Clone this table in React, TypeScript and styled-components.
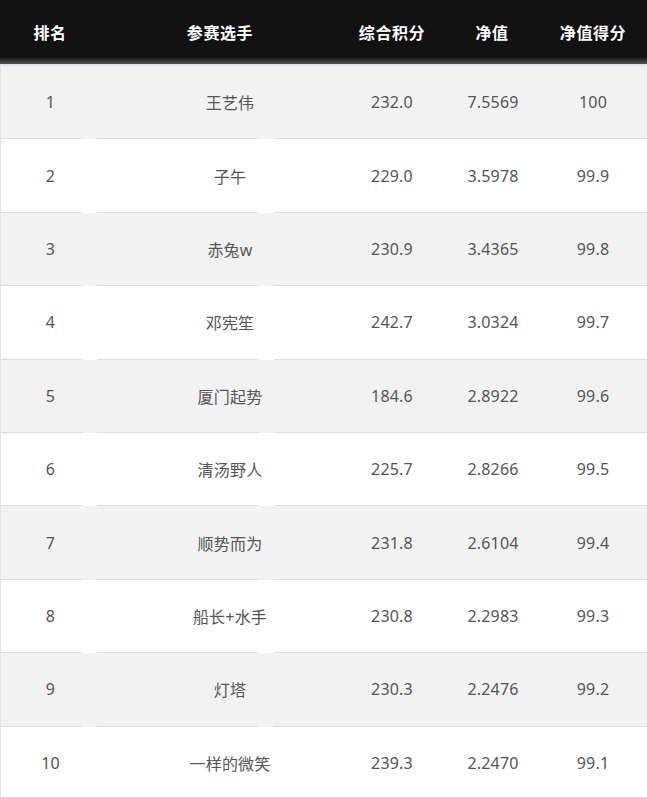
import styled, { createGlobalStyle } from 'styled-components';

const GlobalStyle = createGlobalStyle`
  html, body {
    margin: 0;
    padding: 0;
    background: #fff;
  }
  body {
    font-family: "Noto Sans", "Noto Sans CJK SC", sans-serif;
  }
`;

type Entry = {
  rank: number;
  name: string;
  score: string;
  value: string;
  points: string;
};

const entries: Entry[] = [
  { rank: 1, name: '王艺伟', score: '232.0', value: '7.5569', points: '100' },
  { rank: 2, name: '子午', score: '229.0', value: '3.5978', points: '99.9' },
  { rank: 3, name: '赤兔w', score: '230.9', value: '3.4365', points: '99.8' },
  { rank: 4, name: '邓宪笙', score: '242.7', value: '3.0324', points: '99.7' },
  { rank: 5, name: '厦门起势', score: '184.6', value: '2.8922', points: '99.6' },
  { rank: 6, name: '清汤野人', score: '225.7', value: '2.8266', points: '99.5' },
  { rank: 7, name: '顺势而为', score: '231.8', value: '2.6104', points: '99.4' },
  { rank: 8, name: '船长+水手', score: '230.8', value: '2.2983', points: '99.3' },
  { rank: 9, name: '灯塔', score: '230.3', value: '2.2476', points: '99.2' },
  { rank: 10, name: '一样的微笑', score: '239.3', value: '2.2470', points: '99.1' },
];

const Board = styled.div`
  width: 647px;
  display: flex;
  flex-direction: column;
`;

const Header = styled.div`
  display: grid;
  grid-template-columns: 100px 240px 104px 96px 106px;
  height: 64px;
  align-items: center;
  background: linear-gradient(#111 0, #121212 57px, #555 64px);
  border-bottom: 2px solid #e1e4e8;
`;

const HeadCell = styled.div`
  text-align: center;
  color: #fff;
  font-size: 16px;
  font-weight: 700;
  letter-spacing: 0.6px;
  font-family: "Noto Sans CJK SC", sans-serif;
`;

const Row = styled.div<{ $odd: boolean }>`
  display: flex;
  flex-direction: column;
  background: ${(p) => (p.$odd ? '#f2f2f2' : '#fff')};
  border-left: 1px solid #e2e2e2;
`;

const Cells = styled.div`
  display: grid;
  grid-template-columns: 99px 260px 64px 138px 62px;
  height: 72.4px;
  align-items: center;
`;

const Cell = styled.div`
  text-align: center;
  color: #555;
  font-size: 16px;
  letter-spacing: 0.2px;
  white-space: nowrap;
`;

const Rule = styled.div`
  display: flex;
  height: 1px;
`;

const RuleSegment = styled.div<{ $width?: number; $gap?: number }>`
  background: #dedede;
  flex: ${(p) => (p.$width ? `0 0 ${p.$width}px` : '1')};
  margin-right: ${(p) => p.$gap ?? 0}px;
`;

export default function App() {
  return (
    <>
      <GlobalStyle />
      <Board>
        <Header>
          <HeadCell>排名</HeadCell>
          <HeadCell>参赛选手</HeadCell>
          <HeadCell>综合积分</HeadCell>
          <HeadCell>净值</HeadCell>
          <HeadCell>净值得分</HeadCell>
        </Header>
        {entries.map((e, i) => (
          <Row key={e.rank} $odd={i % 2 === 0}>
            <Cells>
              <Cell>{e.rank}</Cell>
              <Cell>{e.name}</Cell>
              <Cell>{e.score}</Cell>
              <Cell>{e.value}</Cell>
              <Cell>{e.points}</Cell>
            </Cells>
            {i < entries.length - 1 && (
              <Rule>
                <RuleSegment $width={81} $gap={15} />
                <RuleSegment $width={161} $gap={16} />
                <RuleSegment />
              </Rule>
            )}
          </Row>
        ))}
      </Board>
    </>
  );
}
